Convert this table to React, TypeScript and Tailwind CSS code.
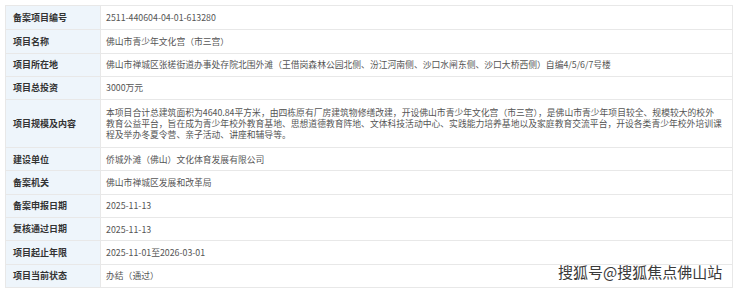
import React from "react";

const rows: { label: string; value: React.ReactNode; tall?: boolean }[] = [
  { label: "备案项目编号", value: "2511-440604-04-01-613280" },
  { label: "项目名称", value: "佛山市青少年文化宫（市三宫）" },
  {
    label: "项目所在地",
    value:
      "佛山市禅城区张槎街道办事处存院北围外滩（王借岗森林公园北侧、汾江河南侧、沙口水闸东侧、沙口大桥西侧）自编4/5/6/7号楼",
  },
  { label: "项目总投资", value: "3000万元" },
  {
    label: "项目规模及内容",
    tall: true,
    value: [
      "本项目合计总建筑面积为4640.84平方米，由四栋原有厂房建筑物修缮改建，开设佛山市青少年文化宫（市三宫），是佛山市青少年项目较全、规模较大的校外",
      "教育公益平台，旨在成为青少年校外教育基地、思想道德教育阵地、文体科技活动中心、实践能力培养基地以及家庭教育交流平台，开设各类青少年校外培训课",
      "程及举办冬夏令营、亲子活动、讲座和辅导等。",
    ],
  },
  { label: "建设单位", value: "侨城外滩（佛山）文化体育发展有限公司" },
  { label: "备案机关", value: "佛山市禅城区发展和改革局" },
  { label: "备案申报日期", value: "2025-11-13" },
  { label: "复核通过日期", value: "2025-11-13" },
  { label: "项目起止年限", value: "2025-11-01至2026-03-01" },
  { label: "项目当前状态", value: "办结（通过）" },
];

export default function App() {
  return (
    <div
      className="relative w-[740px] h-[291px] bg-white pt-[5px] pl-[5px]"
      style={{ fontFamily: '"Noto Sans CJK SC", "Noto Sans", sans-serif' }}
    >
      <div className="w-[728px] border border-[#e8e8e8]">
        {rows.map((r, i) => (
          <div
            key={i}
            className={`flex ${i > 0 ? "border-t border-[#e8e8e8]" : ""} ${
              r.tall ? "h-[48px]" : "h-[23.3px]"
            }`}
          >
            <div className="w-[95px] shrink-0 bg-[#eef5fb] border-r border-[#e8e8e8] flex items-center pl-[7px] text-[9px] font-bold text-[#333]">
              {r.label}
            </div>
            <div className="flex-1 flex items-center pl-[5px] text-[8.8px] text-[#555] whitespace-nowrap overflow-hidden">
              {Array.isArray(r.value) ? (
                <div className="flex flex-col">
                  {r.value.map((line, j) => (
                    <div key={j} className="h-[11px] leading-[11px]">
                      {line}
                    </div>
                  ))}
                </div>
              ) : (
                <div>{r.value}</div>
              )}
            </div>
          </div>
        ))}
      </div>
      <div
        className="absolute left-[558px] top-[262px] text-[15px] leading-[20px] text-[#3a3a3a] whitespace-nowrap"
        style={{ textShadow: "0 0 1px #fff, 0 0 2px #fff" }}
      >
        搜狐号@搜狐焦点佛山站
      </div>
    </div>
  );
}
